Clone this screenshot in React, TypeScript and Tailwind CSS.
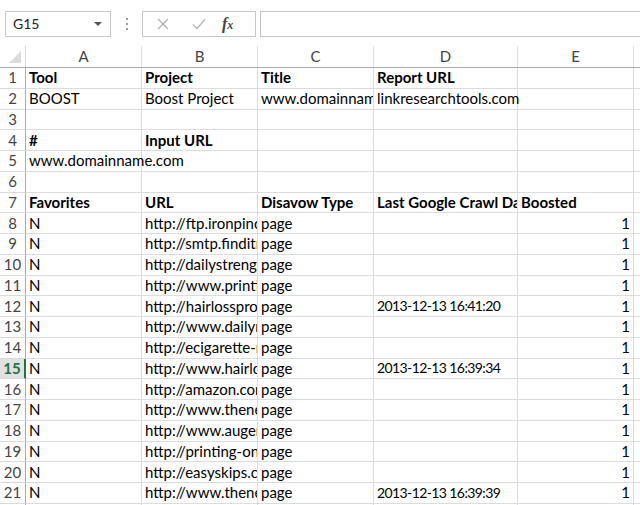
import React from "react";

type Cell = { v: string; bold?: boolean; right?: boolean; spill?: boolean; num?: boolean };

const COLS = [
  { key: "A", w: "w-[116px]" },
  { key: "B", w: "w-[116px]" },
  { key: "C", w: "w-[116px]" },
  { key: "D", w: "w-[144px]" },
  { key: "E", w: "w-[116px]" },
];

const DATES: Record<number, string> = {
  12: "2013-12-13 16:41:20",
  15: "2013-12-13 16:39:34",
  21: "2013-12-13 16:39:39",
};

const URLS = [
  "http://ftp.ironpinoy.com/",
  "http://smtp.finditnow.org/",
  "http://dailystrength.org/",
  "http://www.printing.com/",
  "http://hairlossproducts.net/",
  "http://www.dailymail.co.uk/",
  "http://ecigarette-reviews.com/",
  "http://www.hairloss.net/",
  "http://amazon.com/",
  "http://www.thenewsite.com/",
  "http://www.augenlasern.de/",
  "http://printing-online.com/",
  "http://easyskips.co.uk/",
  "http://www.thenewsite.com/",
];

function buildRows(): (Cell | null)[][] {
  const rows: (Cell | null)[][] = [
    [{ v: "Tool", bold: true }, { v: "Project", bold: true }, { v: "Title", bold: true }, { v: "Report URL", bold: true }, null],
    [{ v: "BOOST" }, { v: "Boost Project" }, { v: "www.domainname.com" }, { v: "linkresearchtools.com", spill: true }, null],
    [null, null, null, null, null],
    [{ v: "#", bold: true }, { v: "Input URL", bold: true }, null, null, null],
    [{ v: "www.domainname.com", spill: true }, null, null, null, null],
    [null, null, null, null, null],
    [{ v: "Favorites", bold: true }, { v: "URL", bold: true }, { v: "Disavow Type", bold: true }, { v: "Last Google Crawl Date", bold: true }, { v: "Boosted", bold: true }],
  ];
  URLS.forEach((u, i) => {
    const n = i + 8;
    rows.push([
      { v: "N" },
      { v: u },
      { v: "page" },
      DATES[n] ? { v: DATES[n], num: true } : null,
      { v: "1", right: true },
    ]);
  });
  rows.push([null, null, null, null, null]);
  return rows;
}

export default function App() {
  const rows = buildRows();
  const font = { fontFamily: "Lato, 'Open Sans', sans-serif" };
  return (
    <div className="w-[640px] h-[505px] overflow-hidden bg-white text-[#000]" style={font}>
      {/* formula bar */}
      <div className="flex items-center h-[46px] pt-[1px]">
        <div className="ml-[5px] w-[106px] h-[26px] border border-[#c6c6c6] flex items-center justify-between pl-[7px] pr-[8px] text-[14px] text-[#222]">
          <span>G15</span>
          <span className="w-0 h-0 border-l-[4px] border-r-[4px] border-t-[4px] border-l-transparent border-r-transparent border-t-[#555]" />
        </div>
        <div className="w-[31px] flex flex-col items-center gap-[3px]">
          <span className="w-[2px] h-[2px] bg-[#999]" />
          <span className="w-[2px] h-[2px] bg-[#999]" />
          <span className="w-[2px] h-[2px] bg-[#999]" />
        </div>
        <div className="w-[114px] h-[26px] border border-[#c6c6c6] flex items-center">
          <svg width="36" height="24" viewBox="0 0 36 24" className="ml-[2px]">
            <path d="M13 7 L23 17 M23 7 L13 17" stroke="#b4b4b4" strokeWidth="1.3" fill="none" />
          </svg>
          <svg width="36" height="24" viewBox="0 0 36 24">
            <path d="M12 12.5 L16 16.5 L24 7.5" stroke="#b4b4b4" strokeWidth="1.3" fill="none" />
          </svg>
          <span className="ml-[5px] italic font-bold text-[16px] leading-none text-[#444]" style={{ fontFamily: "'Liberation Serif', serif" }}>
            f<span className="text-[12px]">x</span>
          </span>
        </div>
        <div className="ml-[4px] flex-1 h-[26px] border-t border-b border-l border-[#c6c6c6]" />
      </div>

      {/* column headers */}
      <div className="flex h-[22px] border-b border-[#ababab] text-[15px] text-[#444]">
        <div className="w-[26px] shrink-0 border-r border-[#dadada] relative">
          <span className="absolute right-[4px] bottom-[4px] w-0 h-0" style={{ borderBottom: "12px solid #dcdcdc", borderLeft: "12px solid transparent" }} />
        </div>
        {COLS.map((c) => (
          <div key={c.key} className={`${c.w} shrink-0 border-r border-[#e1e1e1] flex items-center justify-center`}>
            {c.key}
          </div>
        ))}
        <div className="flex-1" />
      </div>

      {/* rows */}
      {rows.map((r, i) => {
        const n = i + 1;
        const sel = n === 15;
        return (
          <div key={n} className="flex h-[20.75px] text-[15px] leading-none">
            <div
              className={`w-[26px] shrink-0 border-b border-[#dadada] flex items-center justify-center ${
                sel ? "bg-[#e1e1e1] text-[#217346] font-bold border-r-2 border-r-[#217346]" : "border-r border-r-[#ababab] text-[#444]"
              }`}
            >
              {n <= 21 ? n : ""}
            </div>
            {COLS.map((c, j) => {
              const cell = r[j];
              return (
                <div
                  key={c.key}
                  className={`${c.w} shrink-0 border-r border-b border-[#dadcdd] flex items-center pl-[3px] pr-[3px] whitespace-nowrap ${
                    cell?.spill ? "overflow-visible relative z-10" : "overflow-hidden"
                  } ${cell?.right ? "justify-end" : ""} ${cell?.bold ? "font-bold" : ""} ${
                    cell?.num ? "text-[14px] tracking-[-0.6px]" : ""
                  }`}
                >
                  {cell?.v}
                </div>
              );
            })}
            <div className="flex-1 border-b border-[#dadcdd]" />
          </div>
        );
      })}
    </div>
  );
}
